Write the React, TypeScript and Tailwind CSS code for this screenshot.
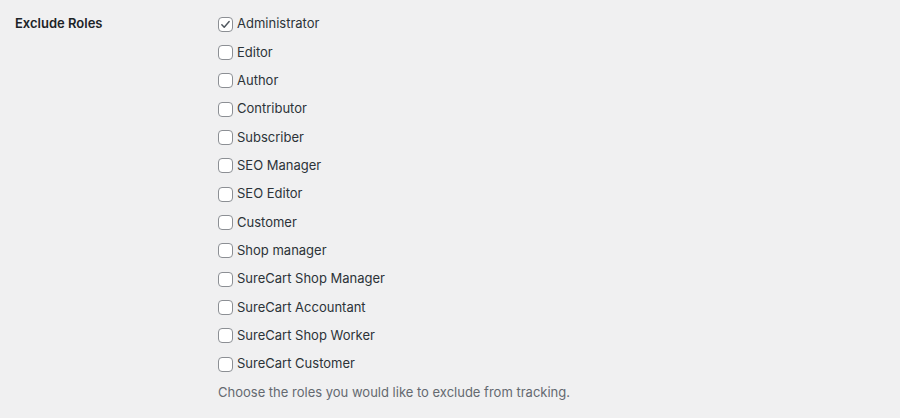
import { useState } from 'react';

const ROLES = [
  'Administrator',
  'Editor',
  'Author',
  'Contributor',
  'Subscriber',
  'SEO Manager',
  'SEO Editor',
  'Customer',
  'Shop manager',
  'SureCart Shop Manager',
  'SureCart Accountant',
  'SureCart Shop Worker',
  'SureCart Customer',
];

export default function App() {
  const [checked, setChecked] = useState<Record<string, boolean>>({ Administrator: true });

  return (
    <div className="w-[900px] h-[418px] bg-[#f0f0f1] text-[13px] text-[#2c3338] font-['Inter','Liberation_Sans',sans-serif] overflow-hidden">
      <div className="flex pt-[10px]">
        {/* Label column */}
        <div className="w-[218px] pl-[15px] h-[28.33px] flex items-center">
          <span className="font-semibold text-[#1d2327]">Exclude Roles</span>
        </div>

        {/* Options */}
        <div className="flex flex-col">
          {ROLES.map((role) => {
            const on = !!checked[role];
            return (
              <label key={role} className="h-[28.33px] flex items-center gap-[4px] cursor-pointer">
                <span
                  className="w-[15px] h-[15px] rounded-[4px] border border-[#8c8f94] bg-white flex items-center justify-center"
                  onClick={() => setChecked((c) => ({ ...c, [role]: !c[role] }))}
                >
                  {on && (
                    <svg width="11" height="11" viewBox="0 0 12 12" fill="none">
                      <path d="M2 6.3l2.6 2.7L10 2.8" stroke="#50575e" strokeWidth="1.6" strokeLinecap="round" strokeLinejoin="round" />
                    </svg>
                  )}
                </span>
                <span>{role}</span>
              </label>
            );
          })}
          <p className="h-[28.33px] flex items-center text-[#646970]">
            Choose the roles you would like to exclude from tracking.
          </p>
        </div>
      </div>
    </div>
  );
}
